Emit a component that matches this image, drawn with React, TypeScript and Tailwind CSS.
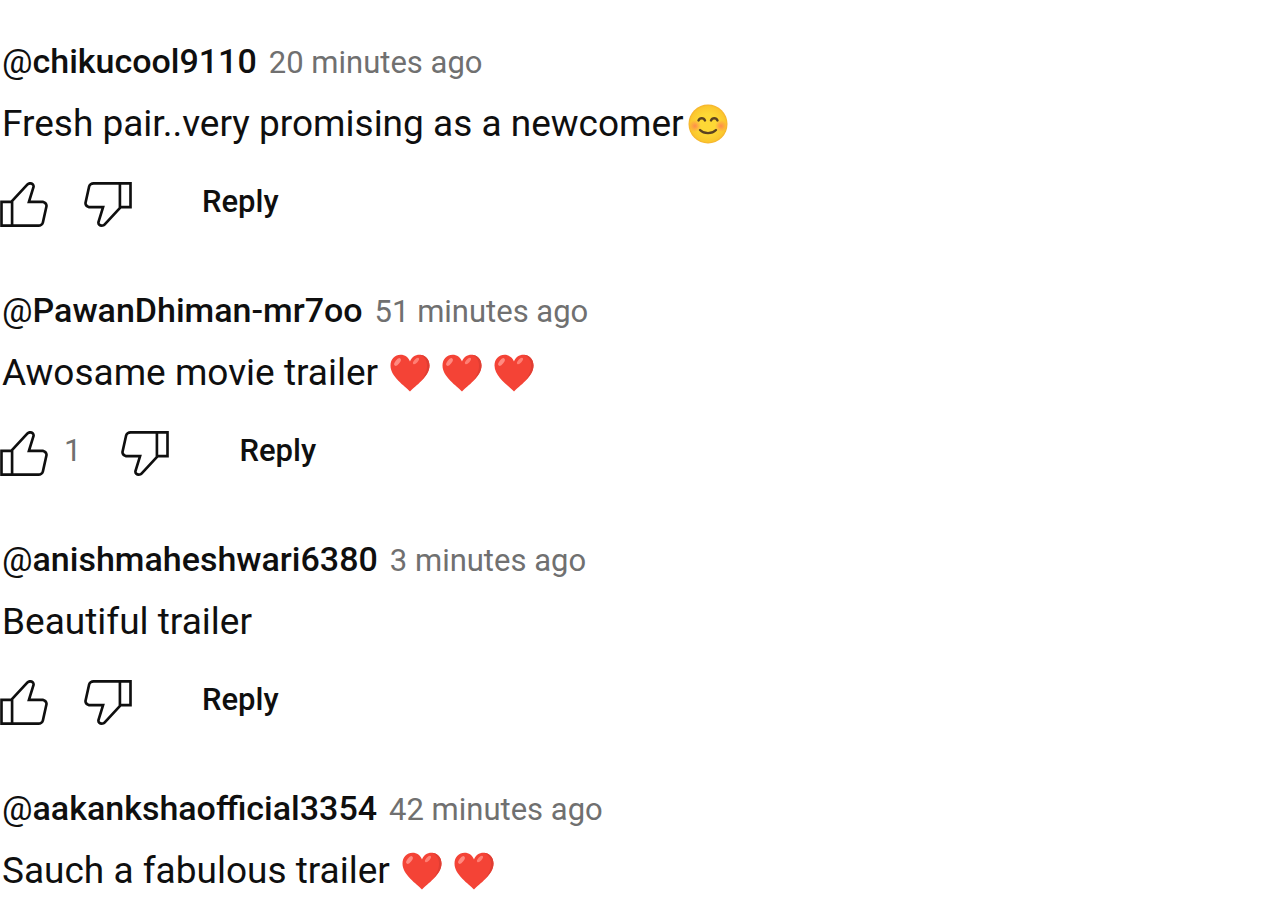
import { useId } from "react";

type Comment = {
  author: string;
  time: string;
  text: string;
  emoji?: "smile" | "heart";
  emojiCount?: number;
  likes?: number;
};

const comments: Comment[] = [
  {
    author: "chikucool9110",
    time: "20 minutes ago",
    text: "Fresh pair..very promising as a newcomer",
    emoji: "smile",
    emojiCount: 1,
  },
  {
    author: "PawanDhiman-mr7oo",
    time: "51 minutes ago",
    text: "Awosame movie trailer",
    emoji: "heart",
    emojiCount: 3,
    likes: 1,
  },
  {
    author: "anishmaheshwari6380",
    time: "3 minutes ago",
    text: "Beautiful trailer",
  },
  {
    author: "aakankshaofficial3354",
    time: "42 minutes ago",
    text: "Sauch a fabulous trailer",
    emoji: "heart",
    emojiCount: 2,
  },
];

function ThumbIcon({ down = false }: { down?: boolean }) {
  return (
    <svg
      viewBox="3 4 18 17"
      className={down ? "h-[45px] w-12 rotate-180" : "h-[45px] w-12"}
      fill="currentColor"
      aria-hidden="true"
    >
      <path d="M18.77,11h-4.23l1.52-4.94C16.38,5.03,15.54,4,14.38,4c-0.58,0-1.14,0.24-1.52,0.65L7,11H3v10h4h1h9.43c1.06,0,1.98-0.67,2.19-1.61l1.34-6C21.23,12.15,20.18,11,18.77,11z M7,20H4v-8h3V20z M19.98,13.17l-1.34,6C18.54,19.65,18.03,20,17.43,20H8v-8.61l5.6-6.06C13.79,5.12,14.08,5,14.38,5c0.26,0,0.5,0.11,0.63,0.3c0.07,0.1,0.15,0.26,0.09,0.47l-1.52,4.94L13.18,12h1.35h4.23c0.41,0,0.8,0.17,1.03,0.46C19.92,12.61,20.05,12.86,19.98,13.17z" />
    </svg>
  );
}

function Smile() {
  const id = useId();
  return (
    <svg viewBox="0 0 40 40" className="size-10" role="img" aria-label="Smiling face">
      <defs>
        <radialGradient id={`${id}face`}>
          <stop offset="0.5" stopColor="#fdd835" />
          <stop offset="0.9" stopColor="#fbc72e" />
          <stop offset="1" stopColor="#f4b02c" />
        </radialGradient>
        <radialGradient id={`${id}cheek`}>
          <stop offset="0" stopColor="#ff7555" stopOpacity="0.75" />
          <stop offset="1" stopColor="#ff7555" stopOpacity="0" />
        </radialGradient>
      </defs>
      <circle cx="20" cy="20" r="19.5" fill={`url(#${id}face)`} />
      <circle cx="7" cy="22" r="6" fill={`url(#${id}cheek)`} />
      <circle cx="33" cy="22" r="6" fill={`url(#${id}cheek)`} />
      <g fill="none" stroke="#5c4220" strokeWidth="2.4" strokeLinecap="round">
        <path d="M10.5 16.5c1.2-3 5.3-3 6.5 0" />
        <path d="M23 16.5c1.2-3 5.3-3 6.5 0" />
        <path d="M12 26c4 4.2 12 4.2 16 0" />
      </g>
    </svg>
  );
}

function Heart() {
  return (
    <svg viewBox="0 0 40 38" className="h-[38px] w-10" role="img" aria-label="Red heart">
      <path
        d="M20 37.5C15 32 0.5 23 0.5 11.5C0.5 5 5 0.8 10.5 0.8C15 0.8 18.5 3.5 20 7.5C21.5 3.5 25 0.8 29.5 0.8C35 0.8 39.5 5 39.5 11.5C39.5 23 25 32 20 37.5Z"
        fill="#f44336"
      />
      <path
        d="M29.5 0.8C35 0.8 39.5 5 39.5 11.5C39.5 17 36 22 32 26C35 21 37.5 16 37 10.5C36.7 5.5 33.5 2 29.5 0.8Z"
        fill="#e03e33"
      />
      <ellipse cx="7.5" cy="8" rx="2.2" ry="4.5" transform="rotate(38 7.5 8)" fill="#ff8a80" />
      <ellipse cx="26" cy="7" rx="1.8" ry="4" transform="rotate(42 26 7)" fill="#ff7f74" />
    </svg>
  );
}

function CommentActions({ likes }: { likes?: number }) {
  return (
    <div className="mt-8 flex items-start">
      <button type="button" aria-label="Like">
        <ThumbIcon />
      </button>
      {likes && (
        <span className="mr-1 ml-4 text-[31px] leading-10 text-[#707070]">{likes}</span>
      )}
      <button type="button" aria-label="Dislike" className="ml-9">
        <ThumbIcon down />
      </button>
      <button type="button" className="ml-[70px] text-[31px] leading-10 font-medium">
        Reply
      </button>
    </div>
  );
}

function CommentItem({ comment, children }: { comment: Comment; children?: React.ReactNode }) {
  return (
    <article>
      <header className="flex items-baseline gap-3 pl-[2px] leading-10">
        <h3 className="text-[34px] font-medium">
          <span className="font-normal">@</span>
          {comment.author}
        </h3>
        <a href="#" className="text-[31px] text-[#707070]">
          {comment.time}
        </a>
      </header>

      <div className="mt-[15px] flex items-center pl-[2px]">
        <p className="text-[37px] leading-[52px]">{comment.text}</p>
        {comment.emoji === "smile" && (
          <span className="ml-1">
            <Smile />
          </span>
        )}
        {comment.emoji === "heart" && (
          <span className="ml-3 flex gap-3">
            {Array.from({ length: comment.emojiCount ?? 1 }, (_, i) => (
              <Heart key={i} />
            ))}
          </span>
        )}
      </div>

      {children}
    </article>
  );
}

export default function App() {
  return (
    <main className="flex min-h-screen flex-col gap-[63px] bg-white pt-[41px] font-['Roboto',sans-serif] text-[#0f0f0f]">
      {comments.map((comment, i) => (
        <CommentItem key={comment.author} comment={comment}>
          {i < comments.length - 1 && <CommentActions likes={comment.likes} />}
        </CommentItem>
      ))}
    </main>
  );
}
